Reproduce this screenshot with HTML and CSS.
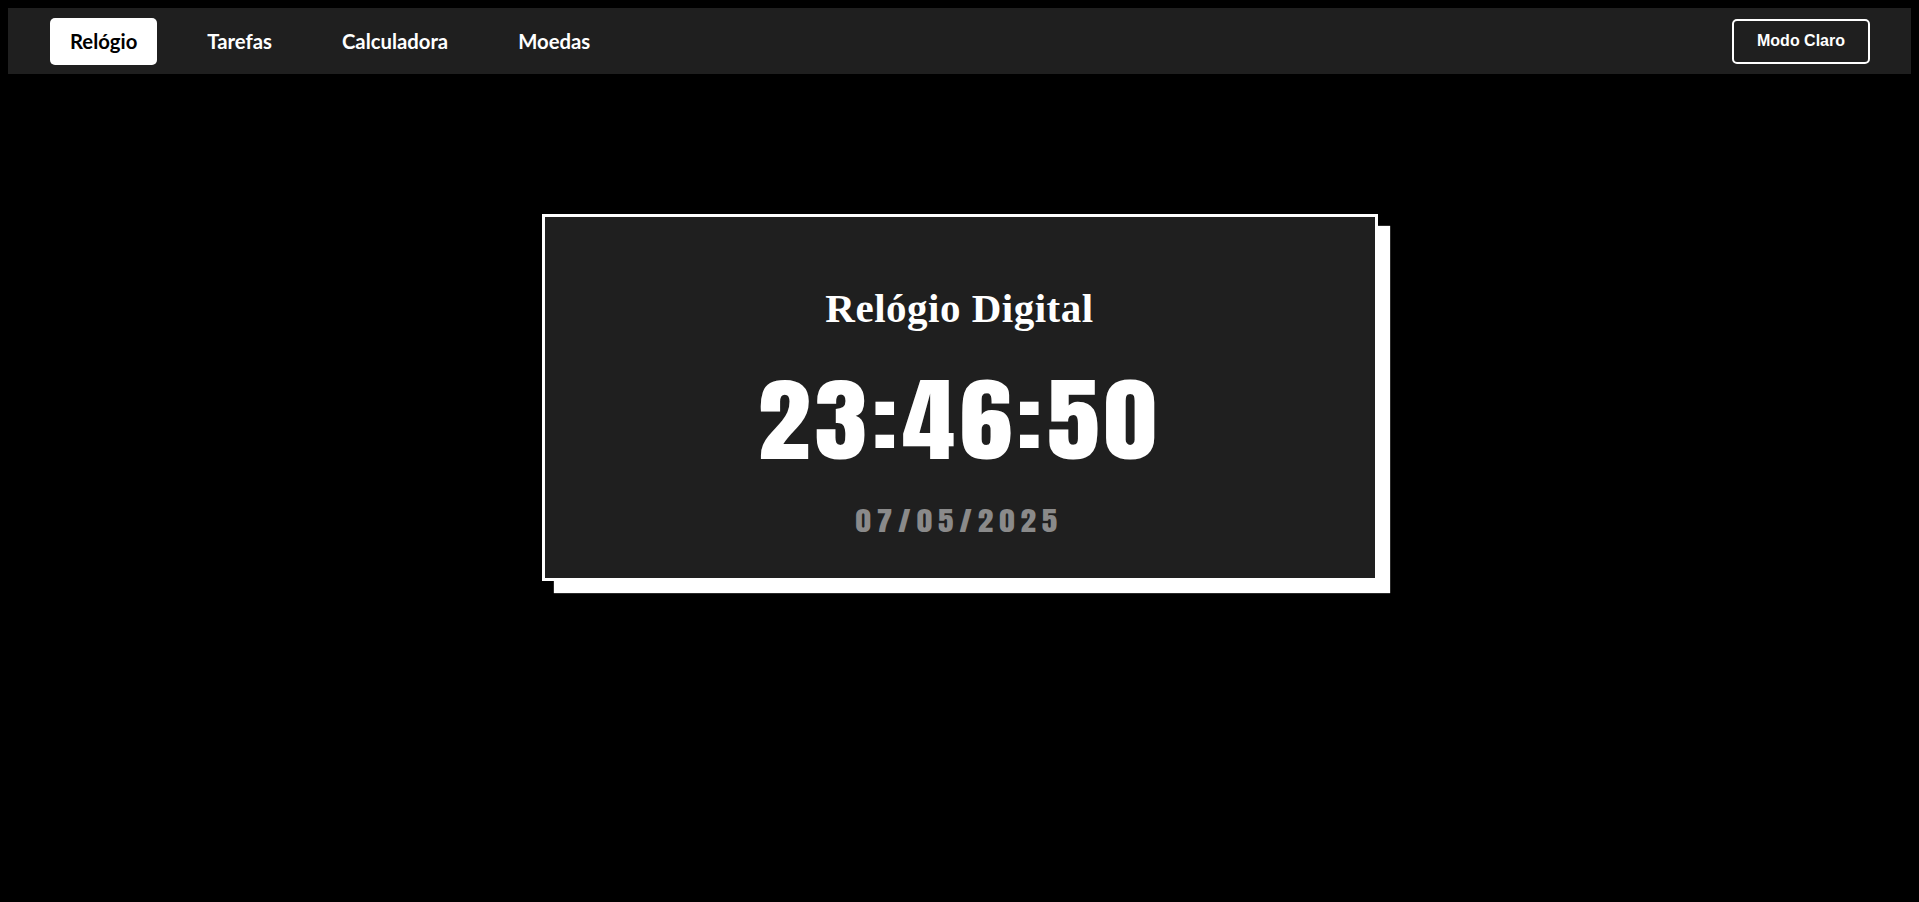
FILE: index.html
```html
<!DOCTYPE html>
<html lang="pt-BR">
<head>
<meta charset="utf-8">
<title>Relógio Digital</title>
<link rel="stylesheet" href="styles.css">
</head>
<body>
<nav class="topbar">
  <ul class="tabs">
    <li><a class="tab active" href="#">Relógio</a></li>
    <li><a class="tab" href="#">Tarefas</a></li>
    <li><a class="tab" href="#">Calculadora</a></li>
    <li><a class="tab" href="#">Moedas</a></li>
  </ul>
  <button class="mode-btn" type="button">Modo Claro</button>
</nav>
<main class="main">
  <section class="clock-card">
    <h1 class="clock-title">Relógio Digital</h1>
    <div class="clock-time"><span class="stretch">23:46:50</span></div>
    <div class="clock-date"><span class="stretch">07/05/2025</span></div>
  </section>
</main>
</body>
</html>
```
FILE: styles.css
```css
html, body {
  background: #000;
}
body {
  margin: 8px;
  font-family: "Liberation Sans", Arial, sans-serif;
  color: #fff;
}

.topbar {
  height: 66px;
  background: #1f1f1f;
  display: flex;
  align-items: center;
  justify-content: space-between;
  padding: 0 41px 0 42px;
}
.tabs {
  list-style: none;
  margin: 0;
  padding: 0;
  display: flex;
  gap: 30px;
}
.tab {
  display: block;
  height: 47px;
  line-height: 47px;
  padding: 0 20px;
  border-radius: 5px;
  font-family: Lato, "Open Sans", sans-serif;
  font-weight: 700;
  font-size: 20.3px;
  color: #fff;
  text-decoration: none;
}
.tab.active {
  background: #fff;
  color: #000;
}
.mode-btn {
  height: 45px;
  padding: 0 23px;
  background: transparent;
  border: 2px solid #fff;
  border-radius: 5px;
  color: #fff;
  font-family: "Liberation Sans", Arial, sans-serif;
  font-weight: 700;
  font-size: 16px;
  cursor: pointer;
}

.main {
  display: flex;
  justify-content: center;
  align-items: flex-start;
  padding-top: 140px;
  min-height: 700px;
}
.clock-card {
  box-sizing: border-box;
  width: 836px;
  background: #1f1f1f;
  border: 3px solid #fff;
  box-shadow: 12px 12px 1px #fff;
  text-align: center;
  padding: 67px 20px 43px;
}
.clock-title {
  margin: 0;
  font-family: "Liberation Serif", "Times New Roman", serif;
  font-weight: 700;
  font-size: 41px;
  letter-spacing: 0.5px;
  line-height: 48px;
  color: #fff;
}
.stretch {
  display: inline-block;
  transform: scaleX(1.15);
}
.clock-time {
  margin-top: 38px;
  font-family: Anton, Impact, "DejaVu Sans", sans-serif;
  font-size: 92px;
  line-height: 100px;
  letter-spacing: 4.2px;
  color: #fff;
}
.clock-date {
  margin-top: 36px;
  font-family: Anton, Impact, "DejaVu Sans", sans-serif;
  font-size: 27px;
  line-height: 29px;
  letter-spacing: 5.2px;
  color: #8a8a8a;
}
```
